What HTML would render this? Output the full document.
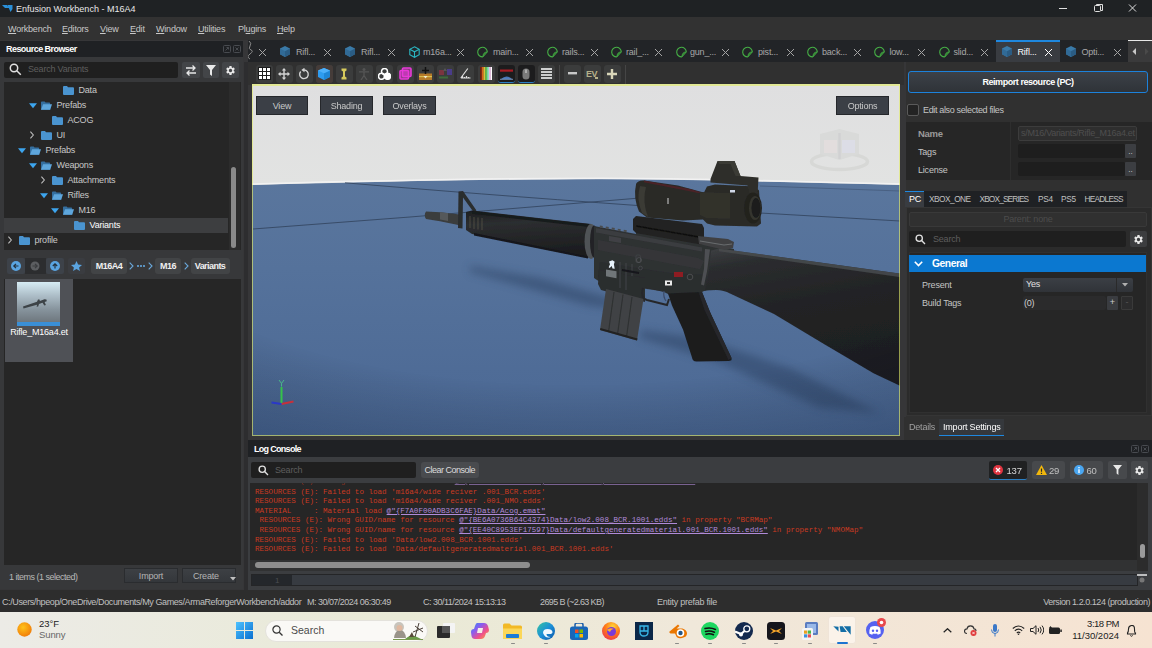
<!DOCTYPE html>
<html><head><meta charset="utf-8">
<style>
*{box-sizing:border-box;margin:0;padding:0}
html,body{width:1152px;height:648px;overflow:hidden;background:#363638;font-family:"Liberation Sans",sans-serif;font-size:9px;letter-spacing:-0.2px;color:#d0d0d0}
.a{position:absolute}
.t{position:absolute;white-space:nowrap;line-height:14px}
.b{font-weight:bold;letter-spacing:-0.55px}
#title{left:0;top:0;width:1152px;height:17px;background:#1f2224}
#menu{left:0;top:17px;width:1152px;height:23px;background:#323232}
#menu .t{top:5px;color:#c8c8c8}
/* left panel */
#lp{left:0;top:41px;width:243px;height:548px;background:#37383a}
#lph{left:0;top:0;width:243px;height:16px;background:#1f2124}
.row{position:absolute;left:0;height:15px;width:224px}
.row .t{top:.5px;color:#c8c8c8;line-height:15px}
.fold{position:absolute;top:3px;width:11px;height:9px}
.arr{position:absolute;top:4px;width:8px;height:8px}
/* tabs */
#tabs{left:248px;top:40px;width:904px;height:22px;background:#222427}
#tabs .t{top:4.700px;color:#a8a8a8}
.x{position:absolute;top:7.500px}
.ti{position:absolute;top:5.500px}
#tb{left:248px;top:62px;width:656px;height:23px;background:#303030}
.tbn{position:absolute;top:2.500px;width:17px;height:18px;background:#3b3c3c;border-radius:3px}
/* viewport */
#vp{left:252px;top:84px;width:648px;height:352px;background:#dedede;overflow:hidden}
#vpb{left:0;top:0;width:648px;height:352px;border:1.500px solid rgba(228,238,104,.62);border-top-width:2px}
.vb{position:absolute;top:12px;height:19px;background:#3b3f46;border:1px solid #25272b;color:#c9c9c9;text-align:center;line-height:18.500px}
/* right panel */
#rp{left:904px;top:62px;width:248px;height:378px;background:#303030}
/* log */
#log{left:248px;top:440px;width:904px;height:150px;background:#3b3d40}
#status{left:0;top:590px;width:1152px;height:22px;background:#2d2d2d}
#status .t{top:5px;color:#c0c0c0}
#task{left:0;top:612px;width:1152px;height:36px;background:linear-gradient(90deg,#ecebe6 0%,#e9ead6 35%,#f0e8da 60%,#f6e3d2 100%)}
.ln{position:absolute;white-space:pre;font-family:"Liberation Mono",monospace;font-size:7.570px;letter-spacing:0;line-height:10px;color:#c93a22}
.lk{color:#b08ad8;text-decoration:underline}
</style></head><body>

<div id="title" class="a">
  <svg class="a" style="left:2px;top:4px" width="11" height="9" viewBox="0 0 11 9"><path d="M0 1h5l2 3h-4zM5.5 1h5v4l-2 3z" fill="#2a8fd8"/></svg>
  <div class="t" style="left:16px;top:2px;font-size:9px;letter-spacing:0;color:#e8e8e8">Enfusion Workbench - M16A4</div>
  <svg class="a" style="left:1058px;top:3px" width="80" height="12" viewBox="0 0 80 12" fill="none" stroke="#e0e0e0" stroke-width="1"><path d="M1 5.5h8"/><rect x="36.500" y="2.500" width="6" height="6" rx="1"/><path d="M38.500 2.500v-1h6v6h-1.500"/><path d="M71 1.500l7 7M78 1.500l-7 7"/></svg>
</div>

<div id="menu" class="a">
  <div class="t" style="left:8px"><u>W</u>orkbench</div>
  <div class="t" style="left:62px"><u>E</u>ditors</div>
  <div class="t" style="left:100px"><u>V</u>iew</div>
  <div class="t" style="left:130px"><u>E</u>dit</div>
  <div class="t" style="left:156px"><u>W</u>indow</div>
  <div class="t" style="left:198px"><u>U</u>tilities</div>
  <div class="t" style="left:238px">Pl<u>u</u>gins</div>
  <div class="t" style="left:277px"><u>H</u>elp</div>
</div>

<div class="a" style="left:244px;top:62px;width:4px;height:528px;background:#2d2d2f"></div>
<div id="lp" class="a"><div id="lph" class="a"><div class="t b" style="left:6px;top:1px;color:#fff">Resource Browser</div><svg class="a" style="left:223px;top:4px" width="20" height="9" viewBox="0 0 20 9" fill="none" stroke="#484b50" stroke-width="1"><rect x=".5" y=".5" width="7" height="7" rx="1"/><path d="M2.500 5.500l3-3M3.500 2.500h2v2"/><rect x="10.500" y=".5" width="7" height="7" rx="1"/><path d="M12.500 2.500l3 3M15.500 2.500l-3 3"/></svg></div>
<div class="a" style="left:4px;top:20.500px;width:174px;height:16.500px;background:#1f1f1f;border-radius:2px"></div>
<svg class="a" style="left:9px;top:22px" width="13" height="13" viewBox="0 0 13 13" fill="none" stroke="#e0e0e0" stroke-width="1.5"><circle cx="5" cy="5" r="3.700"/><path d="M7.800 7.800l4 4"/></svg>
<div class="t" style="left:28px;top:21px;color:#5e5e5e">Search Variants</div>
<div class="a" style="left:182px;top:20.500px;width:18px;height:16.500px;background:#434548;border-radius:2px"></div>
<div class="a" style="left:203px;top:20.500px;width:16px;height:16.500px;background:#434548;border-radius:2px"></div>
<div class="a" style="left:222px;top:20.500px;width:17px;height:16.500px;background:#434548;border-radius:2px"></div>
<svg class="a" style="left:185px;top:23.500px" width="12" height="11" viewBox="0 0 12 11" fill="none" stroke="#e8e8e8" stroke-width="1.300"><path d="M1 3h9M7.500 .5l2.500 2.500-2.500 2.500M11 8h-9M4.500 5.500l-2.500 2.500 2.500 2.500"/></svg>
<svg class="a" style="left:206px;top:23.500px" width="10" height="11" viewBox="0 0 10 11"><path d="M0 0h10l-4 5v6l-2-1.500v-4.500z" fill="#e8e8e8"/></svg>
<svg class="a" style="left:225px;top:23.500px" width="11" height="11" viewBox="0 0 24 24"><path fill="#e8e8e8" d="M19.140 12.940c.04-.3.060-.61.060-.94 0-.32-.02-.64-.07-.94l2.030-1.580a.49.49 0 0 0 .12-.61l-1.920-3.320a.488.488 0 0 0-.59-.22l-2.390.96c-.5-.38-1.030-.7-1.620-.94l-.36-2.540a.484.484 0 0 0-.48-.41h-3.840c-.24 0-.43.170-.47.410l-.36 2.540c-.59.240-1.130.570-1.620.940l-2.390-.96c-.22-.08-.47 0-.59.220L2.740 8.870c-.12.210-.08.470.12.610l2.030 1.580c-.05.300-.09.630-.09.940s.2.640.07.940l-2.030 1.580a.49.49 0 0 0-.12.610l1.920 3.320c.12.220.37.290.59.220l2.390-.96c.5.380 1.030.7 1.620.94l.36 2.540c.5.240.24.410.48.410h3.840c.24 0 .44-.17.470-.41l.36-2.540c.59-.24 1.130-.56 1.620-.94l2.390.96c.22.080.47 0 .59-.22l1.920-3.320c.12-.22.070-.47-.12-.61l-2.010-1.580zM12 15.600c-1.980 0-3.600-1.620-3.600-3.600s1.620-3.600 3.600-3.600 3.600 1.620 3.600 3.600-1.620 3.600-3.600 3.600z"/></svg>
<div class="a" style="left:4px;top:41px;width:237px;height:168px;background:#262626"></div>
<div class="a" style="left:229px;top:41px;width:11px;height:168px;background:#2c2c2c"></div>
<div class="a" style="left:231px;top:126px;width:5px;height:81px;background:#8a8a8a;border-radius:3px"></div>
<div class="row" style="top:41.5px;left:4px;"><svg class="fold" style="left:59px" width="11" height="9" viewBox="0 0 11 9"><path d="M0 1q0-1 1-1h3l1 1.200h5q1 0 1 1v5.800q0 1-1 1h-9q-1 0-1-1z" fill="#4a94d0"/></svg><div class="t" style="left:74.5px;">Data</div></div>
<div class="row" style="top:56.5px;left:4px;"><svg class="arr" style="left:25.3px;top:4.200px" width="7" height="5" viewBox="0 0 7 5"><path d="M0 0h7l-3.500 4.500z" fill="#3da5ee"/></svg><svg class="fold" style="left:37px" width="12" height="9" viewBox="0 0 12 9"><path d="M0 1q0-1 1-1h3l1 1.200h4q1 0 1 1v6.800h-10z" fill="#356f9f"/><path d="M2.300 3.200h9.700l-2 5.800h-10z" fill="#5ea6dc"/></svg><div class="t" style="left:52.5px;">Prefabs</div></div>
<div class="row" style="top:71.5px;left:4px;"><svg class="fold" style="left:48px" width="11" height="9" viewBox="0 0 11 9"><path d="M0 1q0-1 1-1h3l1 1.200h5q1 0 1 1v5.800q0 1-1 1h-9q-1 0-1-1z" fill="#4a94d0"/></svg><div class="t" style="left:63.5px;">ACOG</div></div>
<div class="row" style="top:86.5px;left:4px;"><svg class="arr" style="left:24px;top:3px" width="5" height="9" viewBox="0 0 5 9" fill="none" stroke="#bdbdbd" stroke-width="1.200"><path d="M.7 .8l3.300 3.700-3.300 3.700"/></svg><svg class="fold" style="left:37px" width="11" height="9" viewBox="0 0 11 9"><path d="M0 1q0-1 1-1h3l1 1.200h5q1 0 1 1v5.800q0 1-1 1h-9q-1 0-1-1z" fill="#4a94d0"/></svg><div class="t" style="left:52.5px;">UI</div></div>
<div class="row" style="top:101.5px;left:4px;"><svg class="arr" style="left:14.3px;top:4.200px" width="7" height="5" viewBox="0 0 7 5"><path d="M0 0h7l-3.500 4.500z" fill="#3da5ee"/></svg><svg class="fold" style="left:26px" width="12" height="9" viewBox="0 0 12 9"><path d="M0 1q0-1 1-1h3l1 1.200h4q1 0 1 1v6.800h-10z" fill="#356f9f"/><path d="M2.300 3.200h9.700l-2 5.800h-10z" fill="#5ea6dc"/></svg><div class="t" style="left:41.5px;">Prefabs</div></div>
<div class="row" style="top:116.5px;left:4px;"><svg class="arr" style="left:25.3px;top:4.200px" width="7" height="5" viewBox="0 0 7 5"><path d="M0 0h7l-3.500 4.500z" fill="#3da5ee"/></svg><svg class="fold" style="left:37px" width="12" height="9" viewBox="0 0 12 9"><path d="M0 1q0-1 1-1h3l1 1.200h4q1 0 1 1v6.800h-10z" fill="#356f9f"/><path d="M2.300 3.200h9.700l-2 5.800h-10z" fill="#5ea6dc"/></svg><div class="t" style="left:52.5px;">Weapons</div></div>
<div class="row" style="top:131.5px;left:4px;"><svg class="arr" style="left:35px;top:3px" width="5" height="9" viewBox="0 0 5 9" fill="none" stroke="#bdbdbd" stroke-width="1.200"><path d="M.7 .8l3.300 3.700-3.300 3.700"/></svg><svg class="fold" style="left:48px" width="11" height="9" viewBox="0 0 11 9"><path d="M0 1q0-1 1-1h3l1 1.200h5q1 0 1 1v5.800q0 1-1 1h-9q-1 0-1-1z" fill="#4a94d0"/></svg><div class="t" style="left:63.5px;">Attachments</div></div>
<div class="row" style="top:146.5px;left:4px;"><svg class="arr" style="left:36.3px;top:4.200px" width="7" height="5" viewBox="0 0 7 5"><path d="M0 0h7l-3.500 4.500z" fill="#3da5ee"/></svg><svg class="fold" style="left:48px" width="12" height="9" viewBox="0 0 12 9"><path d="M0 1q0-1 1-1h3l1 1.200h4q1 0 1 1v6.800h-10z" fill="#356f9f"/><path d="M2.300 3.200h9.700l-2 5.800h-10z" fill="#5ea6dc"/></svg><div class="t" style="left:63.5px;">Rifles</div></div>
<div class="row" style="top:161.5px;left:4px;"><svg class="arr" style="left:47.3px;top:4.200px" width="7" height="5" viewBox="0 0 7 5"><path d="M0 0h7l-3.500 4.500z" fill="#3da5ee"/></svg><svg class="fold" style="left:59px" width="12" height="9" viewBox="0 0 12 9"><path d="M0 1q0-1 1-1h3l1 1.200h4q1 0 1 1v6.800h-10z" fill="#356f9f"/><path d="M2.300 3.200h9.700l-2 5.800h-10z" fill="#5ea6dc"/></svg><div class="t" style="left:74.5px;">M16</div></div>
<div class="row" style="top:176.5px;left:4px;background:#3d3e40;"><svg class="fold" style="left:70px" width="11" height="9" viewBox="0 0 11 9"><path d="M0 1q0-1 1-1h3l1 1.200h5q1 0 1 1v5.800q0 1-1 1h-9q-1 0-1-1z" fill="#4a94d0"/></svg><div class="t" style="left:85.5px;color:#fff;">Variants</div></div>
<div class="row" style="top:191.5px;left:4px;"><svg class="arr" style="left:2px;top:3px" width="5" height="9" viewBox="0 0 5 9" fill="none" stroke="#bdbdbd" stroke-width="1.200"><path d="M.7 .8l3.300 3.700-3.300 3.700"/></svg><svg class="fold" style="left:15px" width="11" height="9" viewBox="0 0 11 9"><path d="M0 1q0-1 1-1h3l1 1.200h5q1 0 1 1v5.800q0 1-1 1h-9q-1 0-1-1z" fill="#4a94d0"/></svg><div class="t" style="left:30.5px;">profile</div></div>
<div class="a" style="left:7px;top:217px;width:18px;height:16px;background:#3d4249;border-radius:2px"></div>
<div class="a" style="left:25px;top:217px;width:21px;height:16px;background:#2c2d2f"></div>
<div class="a" style="left:46px;top:217px;width:18px;height:16px;background:#3d4249;border-radius:2px"></div>
<div class="a" style="left:68px;top:217px;width:17px;height:16px;background:#3a3c40;border-radius:2px"></div>
<svg class="a" style="left:11px;top:220px" width="10" height="10" viewBox="0 0 10 10"><circle cx="5" cy="5" r="5" fill="#5aa4e0"/><path d="M7.500 5h-4.500M5 2.800l-2.200 2.200 2.200 2.200" stroke="#22303c" stroke-width="1.200" fill="none"/></svg>
<svg class="a" style="left:30px;top:220px" width="10" height="10" viewBox="0 0 10 10"><circle cx="5" cy="5" r="4.500" fill="#5c5e61"/><path d="M2.500 5h4.500M5 2.800l2.200 2.200-2.200 2.200" stroke="#3a3c3f" stroke-width="1.200" fill="none"/></svg>
<svg class="a" style="left:50px;top:220px" width="10" height="10" viewBox="0 0 10 10"><circle cx="5" cy="5" r="5" fill="#5aa4e0"/><path d="M5 7.500v-4.500M2.800 5l2.200-2.200 2.200 2.200" stroke="#22303c" stroke-width="1.200" fill="none"/></svg>
<svg class="a" style="left:71px;top:220px" width="11" height="10" viewBox="0 0 11 10"><path d="M5.500 0l1.600 3.500 3.900.4-2.900 2.600.8 3.500-3.400-1.900-3.400 1.900.8-3.500-2.900-2.600 3.900-.4z" fill="#5aa4e0"/></svg>
<div class="a b" style="left:91px;top:217px;width:36px;height:16px;background:#424446;border-radius:3px;color:#f0f0f0;text-align:center;line-height:16px">M16A4</div>
<div class="a b" style="left:155px;top:217px;width:26px;height:16px;background:#424446;border-radius:3px;color:#f0f0f0;text-align:center;line-height:16px">M16</div>
<div class="a b" style="left:190.5px;top:217px;width:39px;height:16px;background:#424446;border-radius:3px;color:#f0f0f0;text-align:center;line-height:16px">Variants</div>
<svg class="a" style="left:129px;top:221px" width="5" height="8" viewBox="0 0 5 8" fill="none" stroke="#6aa8da" stroke-width="1.100"><path d="M.7 .7l3.300 3.300-3.300 3.300"/></svg>
<svg class="a" style="left:148px;top:221px" width="5" height="8" viewBox="0 0 5 8" fill="none" stroke="#6aa8da" stroke-width="1.100"><path d="M.7 .7l3.300 3.300-3.300 3.300"/></svg>
<svg class="a" style="left:183.5px;top:221px" width="5" height="8" viewBox="0 0 5 8" fill="none" stroke="#6aa8da" stroke-width="1.100"><path d="M.7 .7l3.300 3.300-3.300 3.300"/></svg>
<div class="a" style="left:137px;top:224px;width:1.500px;height:1.500px;background:#5a90bc;box-shadow:3px 0 #5a90bc,6px 0 #5a90bc"></div>
<div class="a" style="left:4px;top:238px;width:237px;height:286px;background:#262626"></div>
<div class="a" style="left:5px;top:238px;width:68px;height:83px;background:#4f5156"></div>
<div class="a" style="left:17px;top:241px;width:43px;height:44px;background:linear-gradient(#d6ecf4 0%,#aebfc9 30%,#87949d 62%,#6f787f 90%,#3a8fd6 90%)"></div>
<svg class="a" style="left:22px;top:255px" width="32" height="14" viewBox="0 0 32 14"><path d="M1 10.500l14-4.800 1-2.200h1.500l.4 1.500 4.500-1.800 2 .4 .4 1.600-2.200 .9 1.300 2.800-1.600 .6-1.800-2.800-3.500 1.300-.8 2.400-1.600 .3 .4-2-13.500 3.800z" fill="#3d4347"/></svg>
<div class="t" style="left:5px;top:284px;width:68px;text-align:center;color:#fff">Rifle_M16a4.et</div>
<div class="t" style="left:9px;top:529px;color:#b8b8b8;letter-spacing:-0.5px">1 items (1 selected)</div>
<div class="a" style="left:124px;top:527px;width:54px;height:15px;background:linear-gradient(#3d4044,#34373b);border:1px solid #2a2c2f;color:#b4b4b4;text-align:center;line-height:14.500px">Import</div>
<div class="a" style="left:182px;top:527px;width:54px;height:15px;background:linear-gradient(#3d4044,#34373b);border:1px solid #2a2c2f;color:#b4b4b4;line-height:14.500px;padding-left:10px">Create</div>
<svg class="a" style="left:230px;top:536px" width="6" height="4" viewBox="0 0 6 4"><path d="M0 0h6l-3 3.500z" fill="#c0c0c0"/></svg></div>
<div id="tabs" class="a"><svg class="a" style="left:0;top:0" width="5" height="20" viewBox="0 0 5 20" fill="none" stroke="#8a8a8a" stroke-width="1"><path d="M1 1q3 2 1 5t1 4-1 4 0 5"/></svg>
<svg class="x" style="left:10.0px" width="9" height="9" viewBox="0 0 9 9" stroke="#a4a4a4" stroke-width="1" fill="none"><path d="M1 1l7 7M8 1l-7 7"/></svg>
<div class="a" style="left:748px;top:0;width:64px;height:22px;background:#393c41;border-top:2px solid #1e88e0"></div>
<svg class="ti" style="left:32px;top:6px" width="10" height="11" viewBox="0 0 11 12"><path d="M5.500 0l5.500 2.800v6.200l-5.500 3-5.500-3v-6.200z" fill="#3a7aa8"/><path d="M5.500 5.600l5.500-2.800v6.200l-5.500 3z" fill="#2a5c84"/><path d="M5.500 5.600l-5.500-2.800v6.200l5.500 3z" fill="#316a96"/></svg>
<div class="t" style="left:48px;">Rifl...</div>
<svg class="x" style="left:74.5px" width="9" height="9" viewBox="0 0 9 9" stroke="#a4a4a4" stroke-width="1" fill="none"><path d="M1 1l7 7M8 1l-7 7"/></svg>
<svg class="ti" style="left:96.5px;top:6px" width="10" height="11" viewBox="0 0 11 12"><path d="M5.500 0l5.500 2.800v6.200l-5.500 3-5.500-3v-6.200z" fill="#3a7aa8"/><path d="M5.500 5.600l5.500-2.800v6.200l-5.500 3z" fill="#2a5c84"/><path d="M5.500 5.600l-5.500-2.800v6.200l5.500 3z" fill="#316a96"/></svg>
<div class="t" style="left:113px;">Rifl...</div>
<svg class="x" style="left:138.5px" width="9" height="9" viewBox="0 0 9 9" stroke="#a4a4a4" stroke-width="1" fill="none"><path d="M1 1l7 7M8 1l-7 7"/></svg>
<svg class="ti" style="left:160.5px" width="11" height="12" viewBox="0 0 11 12" fill="none" stroke="#2bb4c0" stroke-width="1.100"><path d="M5.500 .8l4.700 2.500v5.400l-4.700 2.600-4.700-2.600v-5.400z"/><path d="M.8 3.300l4.700 2.500 4.700-2.500M5.500 5.800v5.400"/></svg>
<div class="t" style="left:175px;">m16a...</div>
<svg class="x" style="left:207.5px" width="9" height="9" viewBox="0 0 9 9" stroke="#a4a4a4" stroke-width="1" fill="none"><path d="M1 1l7 7M8 1l-7 7"/></svg>
<svg class="ti" style="left:228.5px" width="11" height="12" viewBox="0 0 11 12" fill="none" stroke="#45ae45" stroke-width="1.100"><path d="M10.300 6a4.800 4.800 0 1 0 -4.300 4.800"/><path d="M10.300 6q-4.300 0-4.300 4.800z" fill="#2f7a2f" stroke-width=".9"/></svg>
<div class="t" style="left:245px;">main...</div>
<svg class="x" style="left:276.5px" width="9" height="9" viewBox="0 0 9 9" stroke="#a4a4a4" stroke-width="1" fill="none"><path d="M1 1l7 7M8 1l-7 7"/></svg>
<svg class="ti" style="left:298.5px" width="11" height="12" viewBox="0 0 11 12" fill="none" stroke="#45ae45" stroke-width="1.100"><path d="M10.300 6a4.800 4.800 0 1 0 -4.300 4.800"/><path d="M10.300 6q-4.300 0-4.300 4.800z" fill="#2f7a2f" stroke-width=".9"/></svg>
<div class="t" style="left:314px;">rails...</div>
<svg class="x" style="left:341.5px" width="9" height="9" viewBox="0 0 9 9" stroke="#a4a4a4" stroke-width="1" fill="none"><path d="M1 1l7 7M8 1l-7 7"/></svg>
<svg class="ti" style="left:362.5px" width="11" height="12" viewBox="0 0 11 12" fill="none" stroke="#45ae45" stroke-width="1.100"><path d="M10.300 6a4.800 4.800 0 1 0 -4.300 4.800"/><path d="M10.300 6q-4.300 0-4.300 4.800z" fill="#2f7a2f" stroke-width=".9"/></svg>
<div class="t" style="left:378px;">rail_...</div>
<svg class="x" style="left:405.5px" width="9" height="9" viewBox="0 0 9 9" stroke="#a4a4a4" stroke-width="1" fill="none"><path d="M1 1l7 7M8 1l-7 7"/></svg>
<svg class="ti" style="left:427.5px" width="11" height="12" viewBox="0 0 11 12" fill="none" stroke="#45ae45" stroke-width="1.100"><path d="M10.300 6a4.800 4.800 0 1 0 -4.300 4.800"/><path d="M10.300 6q-4.300 0-4.300 4.800z" fill="#2f7a2f" stroke-width=".9"/></svg>
<div class="t" style="left:442px;">gun_...</div>
<svg class="x" style="left:473.0px" width="9" height="9" viewBox="0 0 9 9" stroke="#a4a4a4" stroke-width="1" fill="none"><path d="M1 1l7 7M8 1l-7 7"/></svg>
<svg class="ti" style="left:494.0px" width="11" height="12" viewBox="0 0 11 12" fill="none" stroke="#45ae45" stroke-width="1.100"><path d="M10.300 6a4.800 4.800 0 1 0 -4.300 4.800"/><path d="M10.300 6q-4.300 0-4.300 4.800z" fill="#2f7a2f" stroke-width=".9"/></svg>
<div class="t" style="left:510px;">pist...</div>
<svg class="x" style="left:537.5px" width="9" height="9" viewBox="0 0 9 9" stroke="#a4a4a4" stroke-width="1" fill="none"><path d="M1 1l7 7M8 1l-7 7"/></svg>
<svg class="ti" style="left:558.5px" width="11" height="12" viewBox="0 0 11 12" fill="none" stroke="#45ae45" stroke-width="1.100"><path d="M10.300 6a4.800 4.800 0 1 0 -4.300 4.800"/><path d="M10.300 6q-4.300 0-4.300 4.800z" fill="#2f7a2f" stroke-width=".9"/></svg>
<div class="t" style="left:574px;">back...</div>
<svg class="x" style="left:604.5px" width="9" height="9" viewBox="0 0 9 9" stroke="#a4a4a4" stroke-width="1" fill="none"><path d="M1 1l7 7M8 1l-7 7"/></svg>
<svg class="ti" style="left:625.5px" width="11" height="12" viewBox="0 0 11 12" fill="none" stroke="#45ae45" stroke-width="1.100"><path d="M10.300 6a4.800 4.800 0 1 0 -4.300 4.800"/><path d="M10.300 6q-4.300 0-4.300 4.800z" fill="#2f7a2f" stroke-width=".9"/></svg>
<div class="t" style="left:641.5px;">low...</div>
<svg class="x" style="left:668.5px" width="9" height="9" viewBox="0 0 9 9" stroke="#a4a4a4" stroke-width="1" fill="none"><path d="M1 1l7 7M8 1l-7 7"/></svg>
<svg class="ti" style="left:690.5px" width="11" height="12" viewBox="0 0 11 12" fill="none" stroke="#45ae45" stroke-width="1.100"><path d="M10.300 6a4.800 4.800 0 1 0 -4.300 4.800"/><path d="M10.300 6q-4.300 0-4.300 4.800z" fill="#2f7a2f" stroke-width=".9"/></svg>
<div class="t" style="left:705.5px;">slid...</div>
<svg class="x" style="left:731.5px" width="9" height="9" viewBox="0 0 9 9" stroke="#a4a4a4" stroke-width="1" fill="none"><path d="M1 1l7 7M8 1l-7 7"/></svg>
<svg class="ti" style="left:754px;top:6px" width="10" height="11" viewBox="0 0 11 12"><path d="M5.500 0l5.500 2.800v6.200l-5.500 3-5.500-3v-6.200z" fill="#3a7aa8"/><path d="M5.500 5.600l5.500-2.800v6.200l-5.500 3z" fill="#2a5c84"/><path d="M5.500 5.600l-5.500-2.800v6.200l5.500 3z" fill="#316a96"/></svg>
<div class="t" style="left:769.5px;color:#fff;">Rifl...</div>
<svg class="x" style="left:796.0px" width="9" height="9" viewBox="0 0 9 9" stroke="#ffffff" stroke-width="1" fill="none"><path d="M1 1l7 7M8 1l-7 7"/></svg>
<svg class="ti" style="left:818px;top:6px" width="10" height="11" viewBox="0 0 11 12"><path d="M5.500 0l5.500 2.800v6.200l-5.500 3-5.500-3v-6.200z" fill="#3a7aa8"/><path d="M5.500 5.600l5.500-2.800v6.200l-5.500 3z" fill="#2a5c84"/><path d="M5.500 5.600l-5.500-2.800v6.200l5.500 3z" fill="#316a96"/></svg>
<div class="t" style="left:833.5px;">Opti...</div>
<svg class="x" style="left:864.5px" width="9" height="9" viewBox="0 0 9 9" stroke="#a4a4a4" stroke-width="1" fill="none"><path d="M1 1l7 7M8 1l-7 7"/></svg>
<div class="a" style="left:880px;top:0;width:24px;height:22px;background:#3a3a3b;border-top:1px solid #e8e8e8"></div>
<svg class="a" style="left:884px;top:8px" width="18" height="7" viewBox="0 0 18 7"><path d="M4 0v7l-3.500-3.500z" fill="#c8c8c8"/><path d="M13 0v7l3.500-3.500z" fill="#4a4a4a"/></svg></div>
<div id="tb" class="a"><div class="tbn" style="left:7.5px"></div>
<div class="tbn" style="left:27.5px"></div>
<div class="tbn" style="left:47.5px"></div>
<div class="tbn" style="left:67.5px"></div>
<div class="tbn" style="left:87.5px"></div>
<div class="tbn" style="left:107.5px"></div>
<div class="tbn" style="left:128.0px"></div>
<div class="tbn" style="left:148.5px"></div>
<div class="tbn" style="left:168.5px"></div>
<div class="tbn" style="left:188.5px"></div>
<div class="tbn" style="left:209.0px"></div>
<div class="tbn" style="left:229.5px"></div>
<div class="tbn" style="left:249.5px;background:#1c1c1d;border-bottom:1px solid #2a7fc4"></div>
<div class="tbn" style="left:269.5px;background:#1c1c1d;border-bottom:1px solid #2a7fc4"></div>
<div class="tbn" style="left:289.5px"></div>
<div class="tbn" style="left:315.5px"></div>
<div class="tbn" style="left:335.5px"></div>
<div class="tbn" style="left:355.5px"></div>
<div class="tbn" style="left:67.5px;background:#453c39"></div>
<svg class="a" style="left:9.5px;top:5.0px" width="13" height="13" viewBox="0 0 13 13"><rect width="13" height="13" fill="#1c1c1c"/><rect x="1" y="1" width="3" height="3" fill="#fff"/><rect x="1" y="5" width="3" height="3" fill="#fff"/><rect x="1" y="9" width="3" height="3" fill="#fff"/><rect x="5" y="1" width="3" height="3" fill="#fff"/><rect x="5" y="5" width="3" height="3" fill="#fff"/><rect x="5" y="9" width="3" height="3" fill="#fff"/><rect x="9" y="1" width="3" height="3" fill="#fff"/><rect x="9" y="5" width="3" height="3" fill="#fff"/><rect x="9" y="9" width="3" height="3" fill="#fff"/></svg>
<svg class="a" style="left:30.0px;top:5.5px" width="12" height="12" viewBox="0 0 12 12"><path d="M6 0l2.200 2.500h-1.500v2.800h2.800v-1.500l2.500 2.200-2.500 2.200v-1.500h-2.800v2.800h1.500l-2.200 2.500-2.200-2.500h1.500v-2.800h-2.800v1.500l-2.500-2.200 2.500-2.200v1.500h2.800v-2.800h-1.500z" fill="#d4d4d4"/></svg>
<svg class="a" style="left:50.0px;top:5.5px" width="12" height="12" viewBox="0 0 12 12"><path d="M2.700 3.500a4.300 4.300 0 1 0 3.300-1.500" fill="none" stroke="#d4d4d4" stroke-width="1.400"/><path d="M6.500 -.3v4.600l-3.200-2.300z" fill="#d4d4d4"/></svg>
<svg class="a" style="left:70.0px;top:5.5px" width="12" height="12" viewBox="0 0 12 12"><path d="M6 0l6 2.500v6.500l-6 3-6-3v-6.500z" fill="#2d9cf0"/><path d="M6 5.200l6-2.700v6.500l-6 3z" fill="#1f86d6"/><path d="M6 0l6 2.500-6 2.700-6-2.700z" fill="#4db0fa"/></svg>
<svg class="a" style="left:93.0px;top:5.5px" width="6" height="12" viewBox="0 0 6 12"><path d="M.5 .5h5v2l-1.500 1v5l1.500 1v2h-5v-2l1.500-1v-5l-1.500-1z" fill="#d6c95c"/></svg>
<svg class="a" style="left:111.0px;top:5.5px" width="10" height="12" viewBox="0 0 10 12"><circle cx="5" cy="1.600" r="1.500" fill="#555"/><path d="M0 3.800h10M5 3.500v4M5 7.500l-3 4.500M5 7.500l3 4.500" stroke="#555" stroke-width="1.300" fill="none"/></svg>
<svg class="a" style="left:130.0px;top:5.5px" width="13" height="12" viewBox="0 0 13 12"><circle cx="6.500" cy="3.500" r="3" fill="none" stroke="#fff" stroke-width="1.500"/><circle cx="3.500" cy="8.300" r="3" fill="none" stroke="#fff" stroke-width="1.500"/><circle cx="9.500" cy="8.300" r="3" fill="#fff" stroke="#fff" stroke-width="1.500"/></svg>
<svg class="a" style="left:150.5px;top:5.0px" width="13" height="13" viewBox="0 0 13 13"><rect x="1" y="3.500" width="8.500" height="8.500" rx="1" fill="#e83ad8" fill-opacity=".55" stroke="#e83ad8" stroke-width="1.600"/><rect x="3.500" y="1" width="8.500" height="8.500" rx="1" fill="#e83ad8" fill-opacity=".45" stroke="#e83ad8" stroke-width="1.600"/></svg>
<svg class="a" style="left:170.5px;top:5.0px" width="13" height="13" viewBox="0 0 13 13"><rect y="6.500" width="13" height="6.500" fill="#b57a28"/><rect y="9" width="13" height="1.200" fill="#d8c050"/><path d="M6.500 0v7M3 3.500h7" stroke="#111" stroke-width="1.500"/><path d="M6.500 11.500l-2-2.500h4z" fill="#f0e8d0"/></svg>
<svg class="a" style="left:190.5px;top:5.0px" width="13" height="13" viewBox="0 0 13 13"><rect x="0" y="3" width="5" height="5" fill="#7a3440"/><rect x="8" y="2" width="5" height="6" fill="#4a3c8a"/><rect x="0" y="9.500" width="9" height="2" fill="#3e6a3a"/><path d="M6 1l2 3h-4z" fill="#555"/></svg>
<svg class="a" style="left:212.0px;top:6.0px" width="11" height="11" viewBox="0 0 11 11"><path d="M.8 10l7-9.500M.8 10h9.700M2.500 10v-2.500M4.500 10v-1M6.500 10v-2M8.500 10v-1" stroke="#e0e0e0" stroke-width="1.200" fill="none"/></svg>
<svg class="a" style="left:231.7px;top:5.0px" width="12.6" height="13" viewBox="0 0 12.6 13"><rect x="0.0" width="1.900" height="13" fill="#6a1f10"/><rect x="1.8" width="1.900" height="13" fill="#d8641c"/><rect x="3.6" width="1.900" height="13" fill="#d8c23a"/><rect x="5.4" width="1.900" height="13" fill="#5ec24e"/><rect x="7.2" width="1.900" height="13" fill="#8fe0c0"/><rect x="9.0" width="1.900" height="13" fill="#e8b8e0"/><rect x="10.8" width="1.900" height="13" fill="#ffffff"/></svg>
<svg class="a" style="left:251.5px;top:5.5px" width="13" height="12" viewBox="0 0 13 12"><rect y="1.500" width="13" height="2.200" fill="#a81c24"/><path d="M1 11q5.500-5 11 0z" fill="#4a78b8"/><path d="M0 11.300h13" stroke="#8ab0e0" stroke-width=".8"/></svg>
<svg class="a" style="left:274.0px;top:5.5px" width="8" height="12" viewBox="0 0 8 12"><rect x=".5" y=".5" width="7" height="11" rx="3.500" fill="#7a7a7a"/><rect x="3.400" y="1.500" width="1.200" height="3.500" fill="#d0d0d0"/></svg>
<svg class="a" style="left:292.5px;top:6.0px" width="11" height="11" viewBox="0 0 11 11"><path d="M0 1h11M0 4h11M0 7h11M0 10h11" stroke="#fff" stroke-width="1.500"/></svg>
<div class="a" style="left:311px;top:3px;width:1px;height:19px;background:#454545"></div>
<svg class="a" style="left:319.5px;top:10.0px" width="9" height="3" viewBox="0 0 9 3"><rect width="9" height="2.400" fill="#c8c8c8"/></svg>
<div class="t b" style="left:338px;top:5px;color:#b5b18a;font-size:9px;letter-spacing:-0.5px">EV</div><div class="a" style="left:347px;top:15px;width:3px;height:2px;background:#b5b18a"></div>
<svg class="a" style="left:359.0px;top:6.5px" width="10" height="10" viewBox="0 0 10 10"><path d="M5 0v10M0 5h10" stroke="#d8d5b8" stroke-width="2.400"/></svg>
<div class="a" style="left:376.5px;top:3px;width:1px;height:19px;background:#454545"></div></div>
<div id="vp" class="a"><svg class="a" style="left:0;top:0" width="649" height="352" viewBox="252 84 649 352">
<defs>
<linearGradient id="sky" x1="0" y1="0" x2="0" y2="1"><stop offset="0" stop-color="#dfdfe0"/><stop offset="1" stop-color="#e2e3e2"/></linearGradient>
<linearGradient id="gnd" x1="0" y1="0" x2="0" y2="1"><stop offset="0" stop-color="#5a769d"/><stop offset=".35" stop-color="#55729b"/><stop offset="1" stop-color="#4b6894"/></linearGradient>
<radialGradient id="vig" cx=".5" cy=".1" r="1"><stop offset=".7" stop-color="#000" stop-opacity="0"/><stop offset="1" stop-color="#0a1830" stop-opacity=".22"/></radialGradient>
<linearGradient id="stk" x1="0" y1="0" x2=".25" y2="1"><stop offset="0" stop-color="#3e4043"/><stop offset=".14" stop-color="#2b2d2f"/><stop offset=".5" stop-color="#222325"/><stop offset="1" stop-color="#1d1e20"/></linearGradient>
<linearGradient id="hg" x1="0" y1="0" x2=".15" y2="1"><stop offset="0" stop-color="#1c1d1f"/><stop offset=".3" stop-color="#2c2e30"/><stop offset="1" stop-color="#1b1c1e"/></linearGradient>
<filter id="bl" x="-20%" y="-50%" width="140%" height="200%"><feGaussianBlur stdDeviation="4"/></filter>
<filter id="b1"><feGaussianBlur stdDeviation=".6"/></filter>
</defs>
<rect x="252" y="84" width="649" height="102" fill="url(#sky)"/>
<path d="M252 185C380 181.500 500 179.300 600 179.300S790 182.600 901 184.900V436H252z" fill="url(#gnd)"/>
<path d="M252 185C380 181.500 500 179.300 600 179.300S790 182.600 901 184.900" fill="none" stroke="#f2f2f2" stroke-width="1.600" transform="translate(0,-1)"/>
<!-- grid lines -->
<g stroke="#2f3f58" stroke-width=".9" fill="none" opacity=".85">
<path d="M345 182.800Q470 193.500 640 205.700l114-1.200"/>
<path d="M253 229l157-12 230-19 60-3"/>
<path d="M760 213l140 8"/>
<path d="M760 186l140 5" opacity=".5"/>
</g>
<!-- ground shadows -->
<g filter="url(#bl)" fill="#2f4566" opacity=".55">
<path d="M470 266l70 12 70 20 20 12-40-4-70-20-50-14z"/>
<path d="M640 330l60 8 90 30 90 45-60-5-100-45-80-25z"/>
</g>
<g filter="url(#b1)">
<!-- barrel + muzzle -->
<path d="M426 211.500l14 .8 22 2.500 0 11-22-4.500-14-2.300q-2.500-4 0-7.500z" fill="#3a3c3d"/>
<path d="M440 212.300l8 .8v8l-8-1.500z" fill="#55585a"/>
<!-- front sight -->
<path d="M458.500 191.500l4.500-.5 13.500 19.500-3 1.500-10.500-14.500-.5 31-4.500-.5z" fill="#2b2d2f"/>
<!-- handguard -->
<path d="M466 212l6-1.500 119 13.500 3 33-5 .5-117-23.500-6-4z" fill="url(#hg)"/>
<path d="M472 211l119 13.200v3l-119-13.500z" fill="#191a1c"/>
<path d="M474 233l114 23.500v2l-114-23z" fill="#15161a"/>
<g stroke="#5a5648" stroke-width="1" opacity=".7"><path d="M470 216v12M474 217v12M478 217.500v12M482 218v12"/></g>
<!-- delta ring -->
<ellipse cx="591" cy="241.500" rx="6.500" ry="17.500" fill="#505356"/>
<ellipse cx="594" cy="241.500" rx="4" ry="16" fill="#222325"/>
<!-- upper receiver -->
<path d="M594 226l42 8 0-3 66 12 32 6 0 8-14 4-2 26-14 4-36 1-28-4-40-6-6-4z" fill="#2e3032"/>
<path d="M596 228l106 19.500v4l-106-19z" fill="#3b3d40"/>
<g fill="#4a4c4e"><rect x="600" y="225.500" width="3" height="2" transform="rotate(10 600 225)"/><rect x="606" y="226.500" width="3" height="2" transform="rotate(10 606 226)"/><rect x="612" y="227.600" width="3" height="2" transform="rotate(10 612 227)"/><rect x="618" y="228.700" width="3" height="2" transform="rotate(10 618 228)"/><rect x="624" y="229.800" width="3" height="2" transform="rotate(10 624 229)"/></g>
<!-- lower receiver -->
<path d="M600 262l30 5 40 6 36 2 2 14-10 5-26 2-8-4-22-5-12 2-28-6-4-6z" fill="#2b2d2f"/>

<rect x="665" y="280.500" width="7" height="5" fill="#e8e8e8"/><rect x="667" y="282" width="3" height="2" fill="#333"/>
<rect x="674" y="272" width="9" height="5" fill="#8e1c22"/>
<circle cx="690" cy="277" r="2.800" fill="none" stroke="#4a4c4e" stroke-width="1"/>
<circle cx="639" cy="260" r="2.500" fill="none" stroke="#4a4c4e" stroke-width="1"/>
<path d="M705 249l5 .5-3 22-3 14-3-1 3-16z" fill="#4e5052"/>
<path d="M599 270l46 8 0 24-44-12-3-6z" fill="#2b2d2f"/>
<path d="M606 269.500l10.500 1.800v7l-10.500-2z" fill="#7d8486" opacity=".85"/>
<path d="M609 261.500l3.500-1.200 2.200 1.500-.8 2.500.8 4.500-2.200-.3-.8-2.500-2 2-1-.7 1.300-3z" fill="#e6f2fa"/>
<g stroke="#55585b" stroke-width=".7" fill="none" opacity=".8"><path d="M620 262v26M626 263v27M632 264v12"/><rect x="636" y="255" width="4.500" height="7.500" rx="1.500"/><circle cx="640.500" cy="268" r="1.800"/></g>
<path d="M598 240l100 18 6 3-4 8-102-19z" fill="#3a3c3f" opacity=".55"/>
<path d="M609 236l12 2v5l-12-2z" fill="#3f4144"/>
<path d="M622 270l17 3" stroke="#15161a" stroke-width="2"/>
<!-- magazine -->
<path d="M606 289l37.500 10-6.500 41.500-37-10.500z" fill="#414345"/>
<g stroke="#2e3032" stroke-width="1.200"><path d="M614 292l-5.500 40M623 294.500l-5.500 40M632 297l-5.500 40"/></g>
<path d="M637 340.500l-37-10.500 .5-2 37 10.500z" fill="#222"/>
<!-- trigger guard -->
<path d="M643 288q-3 10 4 12l20 5 2-6" fill="none" stroke="#26282a" stroke-width="2"/>
<path d="M664 291q-1 6 2 10" fill="none" stroke="#3a4a68" stroke-width="1.200"/>
<!-- pistol grip -->
<path d="M668 293.500l34-1.500 8 20 21.500 46q1 3-3 3l-32 .5q-4 0-4.500-4l-9-28-11-24z" fill="#1b1c1e"/>
<path d="M702 292l8 20 21.500 46-3 2-24-50-6-18z" fill="#252729"/>
<!-- stock -->
<path d="M719 248.600l182 25.100v112.500l-27.500-13-50-29.500-49.500-29.700-44-20.500q-6-3.500-14-3.500l-11 .5 4-20 2-20z" fill="url(#stk)"/>
<path d="M719 248.600l182 25.100v3.500l-182-26z" fill="#4a4d50" opacity=".8"/>
<!-- scope mount -->
<path d="M633 219l3-3 66 8 2 4v17l-68-12-3-3z" fill="#222220"/>
<path d="M636 226l66 11.500" stroke="#111" stroke-width="1.500"/>
<!-- rear sight / charging handle -->
<path d="M698 236l30 3 6 3-1 6-8 2-26-6z" fill="#3f4143"/>
<path d="M700 241l24 4 8-1" stroke="#6a6c6e" stroke-width="1" fill="none"/>
<!-- ACOG -->
<path d="M636 184q2-4 8-3.500l34 5 22 6 4 1 3-6 8-2 40 2 4 4 2 33-4 3-42-1-8-2-4-4-20 1-36-3-8-6q-6-14-3-27z" fill="#2a2a27"/>
<path d="M644 180.500l46 8.500 10 3-.5 1.300-11-2.300-44.500-8.800z" fill="#4c2326"/>
<path d="M640 186q-4 12 2 27l6 4q-6-16-2-30z" fill="#3a3a35"/>
<path d="M700 192l30 1 0 26-24-1-6-3z" fill="#30302c"/>
<!-- RMR -->
<path d="M710.500 179l7-18 17 0 6 15 18 1.500-1 18-8-2-2-8-37-3z" fill="#2f2f2a"/>
<path d="M717.500 161l17 0 6 15-5 0-5-12-11 0z" fill="#3b3b35"/>
<!-- eyepiece -->
<ellipse cx="753" cy="208" rx="9" ry="15.500" fill="#22221f"/>
<ellipse cx="755" cy="208" rx="6" ry="12" fill="#35352f"/>
<ellipse cx="756" cy="208" rx="4.500" ry="10" fill="#1a1b1c"/>
<rect x="730" y="190" width="5" height="2.500" fill="#d0d8e8"/>
<path d="M668 198v6" stroke="#9a9a9a" stroke-width="1.500"/>
</g>
<!-- vignette -->
<path d="M252 185C380 181.500 500 179.300 600 179.300S790 182.600 901 184.900V436H252z" fill="url(#vig)"/>
<!-- view cube (faint) -->
<ellipse cx="839.500" cy="161.500" rx="28" ry="8" fill="none" stroke="#d7d8d6" stroke-width="3.500"/>
<path d="M820 134l19.500-5 19.500 5v20l-19.500 6-19.500-6z" fill="#d9dad9"/>
<path d="M824 140h13v13h-13z" fill="#e2dddd"/><path d="M842 140h13v13h-13z" fill="#dcdde6"/>
<path d="M839.500 133v26" stroke="#d0d1d2" stroke-width="2.500"/>
<!-- axis gizmo -->
<path d="M281.500 404v-17" stroke="#35c24a" stroke-width="2"/>
<path d="M281.500 404l12-2.500" stroke="#c8303a" stroke-width="1.800"/>
<path d="M281.500 404l-10-1.500" stroke="#2a38c8" stroke-width="1.800"/>
<path d="M279 380l2.500 3.500l2.500-3.500M281.500 383.500v3" stroke="#4ac08a" stroke-width=".9" fill="none"/>
</svg>
<div class="vb" style="left:4px;width:52px">View</div>
<div class="vb" style="left:68px;width:53px">Shading</div>
<div class="vb" style="left:131px;width:53px">Overlays</div>
<div class="vb" style="left:584px;width:53px">Options</div><div id="vpb" class="a"></div></div>
<div id="rp" class="a"><div class="a" style="left:0px;top:0px;width:2px;height:378px;background:#363638"></div>
<div class="a" style="left:4px;top:9px;width:240px;height:22px;background:linear-gradient(#3c4148,#2f3338);border:1px solid #1c82dc;border-radius:3px;text-align:center;line-height:20px;color:#fff;font-weight:bold;letter-spacing:-0.45px">Reimport resource (PC)</div>
<div class="a" style="left:3px;top:42px;width:12px;height:12px;background:#232323;border:1px solid #5a5a5a;border-radius:2px"></div>
<div class="t" style="left:19px;top:41px;color:#c4c4c4;letter-spacing:-0.35px">Edit also selected files</div>
<div class="a" style="left:2px;top:60px;width:246px;height:58px;background:#262626"></div>
<div class="a" style="left:106px;top:60px;width:1px;height:58px;background:#2e2e2e"></div>
<div class="t b" style="left:14px;top:65px;color:#9a9a9a;font-size:9.500px;letter-spacing:-0.3px">Name</div>
<div class="t" style="left:14px;top:83px;color:#c4c4c4">Tags</div>
<div class="t" style="left:14px;top:101px;color:#c4c4c4">License</div>
<div class="a" style="left:114px;top:64px;width:119px;height:15px;background:#2e2e2e;border:1px solid #3c3c3c;border-radius:2px;color:#4e4e4e;line-height:13px;overflow:hidden;white-space:nowrap;padding-left:2px;letter-spacing:-0.3px">s/M16/Variants/Rifle_M16a4.et</div>
<div class="a" style="left:114px;top:82px;width:107px;height:14px;background:#1e1e1e;border-radius:2px"></div>
<div class="a" style="left:114px;top:100px;width:107px;height:14px;background:#1e1e1e;border-radius:2px"></div>
<div class="a" style="left:221px;top:82px;width:11px;height:14px;background:#3c3e42;border-radius:1px;color:#ddd;text-align:center;line-height:16px;font-size:8px;letter-spacing:0">..</div>
<div class="a" style="left:221px;top:100px;width:11px;height:14px;background:#3c3e42;border-radius:1px;color:#ddd;text-align:center;line-height:16px;font-size:8px;letter-spacing:0">..</div>
<div class="a" style="left:1px;top:129px;width:222px;height:16px;background:#1f2124"></div>
<div class="a" style="left:1px;top:129px;width:19px;height:16px;background:#393c41;border-top:1px solid #1e88e0"></div>
<div class="t" style="left:5px;top:130px;color:#fff">PC</div>
<div class="t" style="left:25px;top:130px;color:#c0c0c0;font-size:8.300px;letter-spacing:-0.5px">XBOX_ONE</div>
<div class="t" style="left:75.5px;top:130px;color:#c0c0c0;font-size:8.300px;letter-spacing:-0.85px">XBOX_SERIES</div>
<div class="t" style="left:134px;top:130px;color:#c0c0c0;font-size:8.300px;letter-spacing:-0.3px">PS4</div>
<div class="t" style="left:157px;top:130px;color:#c0c0c0;font-size:8.300px;letter-spacing:-0.3px">PS5</div>
<div class="t" style="left:180.5px;top:130px;color:#c0c0c0;font-size:8.300px;letter-spacing:-0.75px">HEADLESS</div>
<div class="a" style="left:2px;top:145px;width:246px;height:209px;background:#2b2b2b;border:1px solid #353535"></div>
<div class="a" style="left:5px;top:150px;width:238px;height:15px;background:#303030;border:1px solid #393939;border-radius:2px;text-align:center;line-height:13px;color:#4c4c4c">Parent: none</div>
<div class="a" style="left:5px;top:169px;width:217px;height:16px;background:#1f1f1f;border-radius:2px"></div>
<svg class="a" style="left:11px;top:172px" width="11" height="11" viewBox="0 0 13 13" fill="none" stroke="#e0e0e0" stroke-width="1.600"><circle cx="5" cy="5" r="3.700"/><path d="M7.800 7.800l4 4"/></svg>
<div class="t" style="left:29px;top:170px;color:#5e5e5e">Search</div>
<div class="a" style="left:226px;top:169px;width:17px;height:16px;background:#3c3d3f;border-radius:2px"></div>
<svg class="a" style="left:229px;top:171.5px" width="11" height="11" viewBox="0 0 24 24"><path fill="#e8e8e8" d="M19.140 12.940c.04-.3.060-.61.060-.94 0-.32-.02-.64-.07-.94l2.030-1.580a.49.49 0 0 0 .12-.61l-1.920-3.320a.488.488 0 0 0-.59-.22l-2.390.96c-.5-.38-1.030-.7-1.620-.94l-.36-2.540a.484.484 0 0 0-.48-.41h-3.840c-.24 0-.43.170-.47.410l-.36 2.540c-.59.240-1.130.570-1.620.940l-2.390-.96c-.22-.08-.47 0-.59.220L2.740 8.870c-.12.210-.08.470.12.610l2.030 1.580c-.05.300-.09.630-.09.940s.2.640.07.940l-2.030 1.580a.49.49 0 0 0-.12.610l1.920 3.320c.12.220.37.290.59.220l2.390-.96c.5.380 1.030.7 1.620.94l.36 2.540c.5.240.24.410.48.410h3.840c.24 0 .44-.17.470-.41l.36-2.540c.59-.24 1.130-.56 1.620-.94l2.390.96c.22.080.47 0 .59-.22l1.920-3.320c.12-.22.070-.47-.12-.61l-2.010-1.580zM12 15.600c-1.980 0-3.600-1.620-3.600-3.600s1.620-3.600 3.600-3.600 3.600 1.620 3.600 3.600-1.620 3.600-3.600 3.600z"/></svg>
<div class="a" style="left:5px;top:190px;width:238px;height:161px;background:#262626;border:1px solid #303030"></div>
<div class="a" style="left:5px;top:193px;width:237px;height:17px;background:#0b78d0"></div>
<svg class="a" style="left:10px;top:198.5px" width="9" height="6" viewBox="0 0 9 6" fill="none" stroke="#fff" stroke-width="1.600"><path d="M.8 .8l3.700 3.700 3.700-3.700"/></svg>
<div class="t b" style="left:28px;top:194.5px;color:#fff;font-size:10.300px;letter-spacing:-0.45px">General</div>
<div class="t" style="left:18px;top:216px;color:#c4c4c4">Present</div>
<div class="t" style="left:18px;top:234px;color:#c4c4c4">Build Tags</div>
<div class="a" style="left:119px;top:215.5px;width:110px;height:14px;background:linear-gradient(#3b3f45,#303338);border-radius:2px"></div>
<div class="a" style="left:212px;top:215.5px;width:1px;height:14px;background:#2a2a2a"></div>
<div class="t" style="left:122px;top:215px;color:#e0e0e0">Yes</div>
<svg class="a" style="left:217.5px;top:221px" width="6" height="4" viewBox="0 0 6 4"><path d="M0 0h6l-3 3.500z" fill="#b0b0b0"/></svg>
<div class="a" style="left:119px;top:234px;width:83px;height:14px;background:#2b2b2c;border-radius:2px"></div>
<div class="t" style="left:120px;top:233.5px;color:#d0d0d0">(0)</div>
<div class="a" style="left:203px;top:234px;width:11px;height:14px;background:#3a3c40;border-radius:1px;color:#ccc;text-align:center;line-height:13px;letter-spacing:0">+</div>
<div class="a" style="left:217px;top:234px;width:12px;height:14px;background:#2c2c2d;border:1px solid #3a3a3a;border-radius:1px;color:#555;text-align:center;line-height:11px;letter-spacing:0">-</div>
<div class="a" style="left:0px;top:355px;width:248px;height:23px;background:#303030"></div>
<div class="t" style="left:5px;top:357.8px;color:#a0a0a0">Details</div>
<div class="a" style="left:35px;top:357px;width:65px;height:17px;background:#35383c;border-bottom:1px solid #1e88e0"></div>
<div class="t" style="left:39px;top:357.8px;color:#fff">Import Settings</div></div>
<div id="log" class="a"><div class="a" style="left:0px;top:0px;width:904px;height:17px;background:#1f2124"></div>
<div class="t b" style="left:6px;top:2px;color:#fff;letter-spacing:-0.7px">Log Console</div>
<svg class="a" style="left:883px;top:5px" width="20" height="9" viewBox="0 0 20 9" fill="none" stroke="#484b50" stroke-width="1"><rect x=".5" y=".5" width="7" height="7" rx="1"/><path d="M2.500 5.500l3-3M3.500 2.500h2v2"/><rect x="10.500" y=".5" width="7" height="7" rx="1"/><path d="M12.500 2.500l3 3M15.500 2.500l-3 3"/></svg>
<div class="a" style="left:3px;top:22px;width:165px;height:16px;background:#1f1f1f;border-radius:2px"></div>
<svg class="a" style="left:9.5px;top:24.5px" width="11" height="11" viewBox="0 0 13 13" fill="none" stroke="#e0e0e0" stroke-width="1.600"><circle cx="5" cy="5" r="3.700"/><path d="M7.800 7.800l4 4"/></svg>
<div class="t" style="left:27px;top:23px;color:#5e5e5e">Search</div>
<div class="a" style="left:172.5px;top:22px;width:58.5px;height:16px;background:#494b4e;border-radius:3px;color:#dcdcdc;text-align:center;line-height:16px;letter-spacing:-0.5px">Clear Console</div>
<div class="a" style="left:741px;top:21px;width:38px;height:19px;background:#202122;border-radius:2px;border-bottom:1px solid #2a7fc4"></div>
<div class="a" style="left:784px;top:21px;width:33px;height:18px;background:#47494c;border-radius:3px"></div>
<div class="a" style="left:822px;top:21px;width:33px;height:18px;background:#47494c;border-radius:3px"></div>
<div class="a" style="left:860px;top:21px;width:19px;height:18px;background:#47494c;border-radius:2px"></div>
<div class="a" style="left:883px;top:21px;width:17px;height:18px;background:#47494c;border-radius:2px"></div>
<svg class="a" style="left:745px;top:25px" width="10" height="10" viewBox="0 0 10 10"><circle cx="5" cy="5" r="5" fill="#e03440"/><path d="M3 3l4 4M7 3l-4 4" stroke="#fff" stroke-width="1.300"/></svg>
<div class="t" style="left:758.5px;top:23.5px;color:#d8d8d8;font-size:9.500px">137</div>
<svg class="a" style="left:787.5px;top:24.5px" width="11" height="10" viewBox="0 0 11 10"><path d="M5.500 0l5.500 10h-11z" fill="#f2b80c"/><path d="M5.500 3.500v3.200M5.500 7.800v1.200" stroke="#2a2a2a" stroke-width="1.200"/></svg>
<div class="t" style="left:801px;top:23.5px;color:#c0c0c0;font-size:9.500px">29</div>
<svg class="a" style="left:826px;top:25px" width="10" height="10" viewBox="0 0 10 10"><circle cx="5" cy="5" r="5" fill="#4aa6f0"/><path d="M5 4.300v3.700M5 2v1.300" stroke="#fff" stroke-width="1.300"/></svg>
<div class="t" style="left:838.5px;top:23.5px;color:#c0c0c0;font-size:9.500px">60</div>
<svg class="a" style="left:865px;top:25px" width="9" height="10" viewBox="0 0 10 11"><path d="M0 0h10l-4 5v6l-2-1.500v-4.500z" fill="#e8e8e8"/></svg>
<svg class="a" style="left:886px;top:24.5px" width="11" height="11" viewBox="0 0 24 24"><path fill="#e8e8e8" d="M19.140 12.940c.04-.3.060-.61.060-.94 0-.32-.02-.64-.07-.94l2.030-1.580a.49.49 0 0 0 .12-.61l-1.920-3.320a.488.488 0 0 0-.59-.22l-2.390.96c-.5-.38-1.030-.7-1.620-.94l-.36-2.540a.484.484 0 0 0-.48-.41h-3.840c-.24 0-.43.170-.47.410l-.36 2.540c-.59.240-1.130.570-1.620.940l-2.390-.96c-.22-.08-.47 0-.59.220L2.740 8.870c-.12.210-.08.470.12.610l2.030 1.580c-.05.300-.09.630-.09.940s.2.640.07.940l-2.030 1.580a.49.49 0 0 0-.12.610l1.920 3.320c.12.220.37.290.59.220l2.390-.96c.5.380 1.030.7 1.620.94l.36 2.540c.5.240.24.410.48.410h3.840c.24 0 .44-.17.470-.41l.36-2.540c.59-.24 1.130-.56 1.620-.94l2.390.96c.22.080.47 0 .59-.22l1.920-3.320c.12-.22.070-.47-.12-.61l-2.010-1.580zM12 15.600c-1.980 0-3.600-1.620-3.600-3.600s1.620-3.600 3.600-3.600 3.600 1.620 3.600 3.600-1.620 3.600-3.600 3.600z"/></svg>
<div class="a" style="left:2px;top:43px;width:898px;height:77px;background:#262626;overflow:hidden"><div class="ln" style="top:-7px;left:5.0px"><span style="opacity:.6">RESOURCES (E): Wrong GUID/name for resource <span class="lk">@"{EE40C8953EF17597}Data/defaultgeneratedmaterial.001</span></span></div>
<div class="ln" style="top:3.5px;left:5.0px">RESOURCES (E): Failed to load 'm16a4/wide reciver .001_BCR.edds'</div>
<div class="ln" style="top:13px;left:5.0px">RESOURCES (E): Failed to load 'm16a4/wide reciver .001_NMO.edds'</div>
<div class="ln" style="top:22.600000000000023px;left:5.0px">MATERIAL     : Material load <span class="lk">@"{F7A0F00ADB3C6FAE}Data/Acog.emat"</span></div>
<div class="ln" style="top:32.299999999999955px;left:9.5px">RESOURCES (E): Wrong GUID/name for resource <span class="lk">@"{BE6A0736B64C4374}Data/low2.008_BCR.1001.edds"</span> in property "BCRMap"</div>
<div class="ln" style="top:42px;left:9.5px">RESOURCES (E): Wrong GUID/name for resource <span class="lk">@"{EE40C8953EF17597}Data/defaultgeneratedmaterial.001_BCR.1001.edds"</span> in property "NMOMap"</div>
<div class="ln" style="top:51.60000000000002px;left:5.0px">RESOURCES (E): Failed to load 'Data/low2.008_BCR.1001.edds'</div>
<div class="ln" style="top:61.299999999999955px;left:5.0px">RESOURCES (E): Failed to load 'Data/defaultgeneratedmaterial.001_BCR.1001.edds'</div></div>
<div class="a" style="left:889px;top:43px;width:11px;height:77px;background:#2c2c2c"></div>
<div class="a" style="left:891.5px;top:104px;width:5px;height:14px;background:#9a9a9a;border-radius:3px"></div>
<div class="a" style="left:2px;top:120px;width:887px;height:10.5px;background:#313233"></div>
<div class="a" style="left:889px;top:120px;width:11px;height:10.5px;background:#2c2c2c"></div>
<div class="a" style="left:7px;top:122px;width:275px;height:6px;background:#8e8e8e;border-radius:3px"></div>
<div class="a" style="left:2.5px;top:134px;width:887px;height:12px;background:#373b41;border:1px solid #242527"></div>
<div class="a" style="left:3.5px;top:135px;width:40px;height:10px;background:#24272b"></div>
<div class="t" style="left:27px;top:133.5px;color:#4a4d52;font-size:8px">1</div>
<svg class="a" style="left:889px;top:134px" width="10" height="10" viewBox="0 0 10 10"><path d="M0 1h10" stroke="#e8e8e8" stroke-width="1.500"/><circle cx="5" cy="6" r="2.500" fill="#777"/></svg></div>
<div id="status" class="a"><div class="t" style="left:2px;letter-spacing:-0.395px">C:/Users/hpeop/OneDrive/Documents/My Games/ArmaReforgerWorkbench/addor</div>
<div class="t" style="left:307px;letter-spacing:-0.52px">M: 30/07/2024 06:30:49</div>
<div class="t" style="left:423px;letter-spacing:-0.5px">C: 30/11/2024 15:13:13</div>
<div class="t" style="left:540px;letter-spacing:-0.62px">2695 B (~2.63 KB)</div>
<div class="t" style="left:657px;letter-spacing:-0.25px">Entity prefab file</div>
<div class="t" style="right:2px;letter-spacing:-0.46px">Version 1.2.0.124 (production)</div></div>
<div id="task" class="a"><svg class="a" style="left:16.5px;top:10.0px" width="15" height="15" viewBox="0 0 15 15"><defs><radialGradient id="sun" cx=".4" cy=".35" r=".7"><stop offset="0" stop-color="#ffc21a"/><stop offset="1" stop-color="#f07a08"/></radialGradient></defs><circle cx="7.500" cy="7.500" r="7.200" fill="url(#sun)"/></svg>
<div class="t" style="left:39px;top:5px;color:#222;font-size:9.500px;letter-spacing:0">23°F</div>
<div class="t" style="left:39px;top:16px;color:#666;font-size:9.500px;letter-spacing:-0.1px">Sunny</div>
<svg class="a" style="left:235.5px;top:10.0px" width="17" height="17" viewBox="0 0 17 17"><defs><linearGradient id="wl" x1="0" y1="0" x2="1" y2="1"><stop offset="0" stop-color="#4cc2ff"/><stop offset="1" stop-color="#0a6fd0"/></linearGradient></defs><path d="M0 0h8v8h-8zM9 0h8v8h-8zM0 9h8v8h-8zM9 9h8v8h-8z" fill="url(#wl)"/></svg>
<div class="a" style="left:265px;top:8px;width:162.500px;height:22px;background:#faf9f6;border-radius:11px;border:1px solid #e4e2dc"></div>
<svg class="a" style="left:272.0px;top:13.0px" width="11" height="11" viewBox="0 0 11 11"><circle cx="4.500" cy="4.500" r="3.600" fill="none" stroke="#333" stroke-width="1.200"/><path d="M7.200 7.200l3.300 3.300" stroke="#333" stroke-width="1.300"/></svg>
<div class="t" style="left:291px;top:11px;color:#4a4a4a;font-size:10.500px;letter-spacing:0">Search</div>
<svg class="a" style="left:391.0px;top:8.0px" width="34" height="20" viewBox="0 0 34 20"><ellipse cx="8" cy="7" rx="5" ry="5" fill="#c8c4bc"/><path d="M3 18q1-8 6-8t6 8z" fill="#9a948a"/><circle cx="8.500" cy="8" r="3" fill="#e0b8a0"/><path d="M2 19h30v1h-30z" fill="#7a9a50"/><path d="M14 19q6-6 12-2l4 2z" fill="#6a9a48"/><path d="M28 3l-4 14M24 6l8 6M22 12l10-4" stroke="#4a4038" stroke-width="1"/><path d="M18 17l3-5 2 5z" fill="#5a4a3a"/></svg>
<svg class="a" style="left:437.0px;top:11.0px" width="18" height="15" viewBox="0 0 18 15"><rect x="6" y="0" width="12" height="10" rx="1" fill="#f4f4f4"/><rect x="0" y="3" width="13" height="12" rx="1" fill="#2a2a2a"/><rect x="5" y="3" width="8" height="7" fill="#555"/></svg>
<svg class="a" style="left:470.5px;top:9.5px" width="18" height="17" viewBox="0 0 18 17"><defs><linearGradient id="cp" x1="0" y1="0" x2="1" y2="1"><stop offset="0" stop-color="#2a8cf0"/><stop offset=".35" stop-color="#8a5cf0"/><stop offset=".65" stop-color="#f0508a"/><stop offset="1" stop-color="#f8b030"/></linearGradient></defs><path d="M5 1h8q3 0 4 3l1 4q0 3-3 3l-1 3q-1 3-4 3h-6q-3 0-3.500-3l-.5-4q0-3 3-3l1-3q1-3 2-3z" fill="url(#cp)"/><path d="M7 6h5l-1 5h-5z" fill="#f4efe8"/></svg>
<svg class="a" style="left:503.0px;top:10.5px" width="19" height="16" viewBox="0 0 19 16"><path d="M0 2q0-1.500 1.500-1.500h5l2 2h9q1.500 0 1.500 1.500v10.500q0 1.500-1.500 1.500h-16q-1.500 0-1.500-1.500z" fill="#f2b926"/><path d="M0 5.500h19v9q0 1.500-1.500 1.500h-16q-1.500 0-1.500-1.500z" fill="#fbd758"/><rect x="3" y="11" width="13" height="4" rx=".8" fill="#1c7cd6"/></svg>
<svg class="a" style="left:537.0px;top:9.5px" width="18" height="18" viewBox="0 0 18 18"><defs><linearGradient id="eg" x1="0" y1="0" x2="1" y2="1"><stop offset="0" stop-color="#38c6a0"/><stop offset=".5" stop-color="#1c8fd8"/><stop offset="1" stop-color="#0c56a8"/></linearGradient></defs><circle cx="9" cy="9" r="9" fill="url(#eg)"/><path d="M6 11q0-4 4.500-4t5 3q0 2-3 2h-3q0 3 4 3-5 2-7.500-4z" fill="#f0f8ff"/></svg>
<svg class="a" style="left:569.5px;top:10.5px" width="18" height="17" viewBox="0 0 18 17"><path d="M5 4v-2q0-2 2-2h4q2 0 2 2v2" fill="none" stroke="#1c5ea8" stroke-width="1.500"/><rect x="0" y="3.500" width="18" height="13.500" rx="2.500" fill="#1a66b8"/><rect x="5" y="6.500" width="3.500" height="3.500" fill="#f25022"/><rect x="9.500" y="6.500" width="3.500" height="3.500" fill="#7fba00"/><rect x="5" y="11" width="3.500" height="3.500" fill="#00a4ef"/><rect x="9.500" y="11" width="3.500" height="3.500" fill="#ffb900"/></svg>
<svg class="a" style="left:602.0px;top:9.5px" width="18" height="18" viewBox="0 0 18 18"><defs><radialGradient id="ff" cx=".6" cy=".25" r=".9"><stop offset="0" stop-color="#ffd83a"/><stop offset=".45" stop-color="#ff7a18"/><stop offset="1" stop-color="#e8265a"/></radialGradient></defs><circle cx="9" cy="9" r="9" fill="url(#ff)"/><circle cx="9.500" cy="9.500" r="4.500" fill="#7a3ad8"/><path d="M5 8q3-3 7-1-3 0-4 3z" fill="#ffb030"/></svg>
<svg class="a" style="left:635.0px;top:9.5px" width="18" height="18" viewBox="0 0 18 18"><rect width="18" height="18" fill="#0b2748"/><path d="M5 4h8v6q0 4-4 4t-4-4zM9 4v5M5 9h8" fill="none" stroke="#39b8e8" stroke-width="1.300"/></svg>
<svg class="a" style="left:667.5px;top:10.5px" width="19" height="16" viewBox="0 0 19 16"><path d="M1 9l9-7.500 1.500 1.500-3 2.500h6q4.500 1.500 4.500 5t-5 4.500-6-2.500l-1-2-4.500 0z" fill="#ea7600"/><circle cx="12.500" cy="10" r="3.800" fill="#fff"/><circle cx="12.500" cy="10" r="2.200" fill="#265787"/></svg>
<svg class="a" style="left:701.0px;top:9.5px" width="18" height="18" viewBox="0 0 18 18"><circle cx="9" cy="9" r="9" fill="#1ed760"/><path d="M4 6.500q5.500-1.500 10.500 1M4.500 9.500q4.500-1.200 9 .8M5 12.200q4-1 7.500 .6" stroke="#111" stroke-width="1.500" fill="none" stroke-linecap="round"/></svg>
<svg class="a" style="left:734.5px;top:9.5px" width="18" height="18" viewBox="0 0 18 18"><circle cx="9" cy="9" r="9" fill="#13294e"/><circle cx="11.800" cy="6.800" r="3" fill="none" stroke="#fff" stroke-width="1.300"/><path d="M0 9.500l6 2.500 3.500-3" stroke="#fff" stroke-width="2.200" fill="none"/><circle cx="6" cy="12.500" r="2" fill="#fff"/></svg>
<svg class="a" style="left:767.0px;top:9.5px" width="18" height="18" viewBox="0 0 18 18"><rect width="18" height="18" rx="3.500" fill="#16161c"/><path d="M3 6l3 3-3 3 6-2.500 6 2.500-3-3 3-3-6 2.500z" fill="#f2a32a"/></svg>
<svg class="a" style="left:800.5px;top:9.5px" width="18" height="18" viewBox="0 0 18 18"><rect x="4" y="0" width="13" height="13" rx="1.500" fill="#5a7cc0"/><rect x="6" y="2" width="9" height="9" fill="#9ab8e8"/><rect x="1" y="6" width="11" height="12" rx="1.500" fill="#f4f4f4"/><rect x="3" y="8.500" width="3.200" height="3.200" fill="#e8a020"/><rect x="6.800" y="8.500" width="3.200" height="3.200" fill="#48b848"/><rect x="3" y="12.300" width="3.200" height="3.200" fill="#3a90e0"/><rect x="6.800" y="12.300" width="3.200" height="3.200" fill="#e85050"/></svg>
<div class="a" style="left:828px;top:3.500px;width:28px;height:28.500px;background:#fbf3ea;border-radius:3px;border:1px solid #efe4d8"></div>
<svg class="a" style="left:833.2px;top:13.899999999999977px" width="18" height="9" viewBox="0 0 18 9"><path d="M.3 .3l5.200 .4v4.800z M6.600 .3h3.100l4.200 5.600h-6.300z M10.800 .3h6.900v8.400z" fill="#146ea6"/></svg>
<svg class="a" style="left:865.8px;top:9.0px" width="18" height="18" viewBox="0 0 18 18"><circle cx="9" cy="9" r="9" fill="#5662f0"/><path d="M4.500 6q4.500-2 9 0 1.500 3 1.200 6.500-1.500 1-3 1.200l-.6-1.200q-2.100.6-4.200 0l-.6 1.200q-1.500-.2-3-1.200-.3-3.500 1.200-6.500z" fill="#fff"/><circle cx="7" cy="9.800" r="1.200" fill="#5662f0"/><circle cx="11" cy="9.800" r="1.200" fill="#5662f0"/></svg>
<svg class="a" style="left:877.25px;top:6.25px" width="9.5" height="9.5" viewBox="0 0 9.5 9.5"><circle cx="4.500" cy="4.500" r="4.500" fill="#e8484c"/><circle cx="4.500" cy="4.500" r="1.800" fill="#fff"/></svg>
<div class="a" style="left:510.5px;top:30.5px;width:4px;height:1.500px;background:#8a8a88;border-radius:1px"></div>
<div class="a" style="left:544px;top:30.5px;width:4px;height:1.500px;background:#8a8a88;border-radius:1px"></div>
<div class="a" style="left:675px;top:30.5px;width:4px;height:1.500px;background:#8a8a88;border-radius:1px"></div>
<div class="a" style="left:708px;top:30.5px;width:4px;height:1.500px;background:#8a8a88;border-radius:1px"></div>
<div class="a" style="left:741.5px;top:30.5px;width:4px;height:1.500px;background:#8a8a88;border-radius:1px"></div>
<div class="a" style="left:774px;top:30.5px;width:4px;height:1.500px;background:#8a8a88;border-radius:1px"></div>
<div class="a" style="left:807.5px;top:30.5px;width:4px;height:1.500px;background:#8a8a88;border-radius:1px"></div>
<div class="a" style="left:872.5px;top:30.5px;width:4px;height:1.500px;background:#8a8a88;border-radius:1px"></div>
<div class="a" style="left:836.500px;top:30px;width:11px;height:2px;background:#1c74d0;border-radius:1px"></div>
<svg class="a" style="left:942.5px;top:15.5px" width="9" height="5" viewBox="0 0 9 5"><path d="M.7 4.300l3.800-3.600 3.800 3.600" fill="none" stroke="#222" stroke-width="1.200"/></svg>
<svg class="a" style="left:964.0px;top:13.0px" width="13" height="11" viewBox="0 0 13 11"><path d="M3 8.500q-2.500 0-2.500-2.300t2.500-2.300q.5-3 3.500-3t3.500 3q2 0 2 2" fill="none" stroke="#333" stroke-width="1.100"/><circle cx="9.500" cy="8" r="3" fill="#e03a3a"/><path d="M8.300 6.800l2.400 2.400M10.700 6.800l-2.400 2.400" stroke="#fff" stroke-width=".8"/></svg>
<svg class="a" style="left:990.7px;top:11.5px" width="8" height="13" viewBox="0 0 8 13"><rect x="2" y="0" width="4" height="8" rx="2" fill="#3a78c8"/><path d="M.5 5.500q0 4 3.500 4t3.500-4M4 9.500v3" fill="none" stroke="#3a78c8" stroke-width="1"/></svg>
<svg class="a" style="left:1012.3px;top:12.5px" width="13" height="10" viewBox="0 0 13 10"><path d="M.8 3.500q5.700-5 11.400 0M2.800 5.800q3.700-3.300 7.400 0M4.800 8q1.700-1.600 3.400 0" fill="none" stroke="#222" stroke-width="1.100"/><circle cx="6.500" cy="9.200" r=".8" fill="#222"/></svg>
<svg class="a" style="left:1029.7px;top:13.0px" width="14" height="10" viewBox="0 0 14 10"><path d="M.5 3.500h2.500l3-2.800v8.600l-3-2.800h-2.500z" fill="none" stroke="#222" stroke-width="1"/><path d="M8 3q1.500 2 0 4M10 1.800q2.500 3.200 0 6.400M12 .6q3.500 4.400 0 8.800" fill="none" stroke="#222" stroke-width="1"/></svg>
<svg class="a" style="left:1047.7px;top:13.5px" width="14" height="9" viewBox="0 0 14 9"><rect x="1" y="1.500" width="11" height="6.500" rx="1.500" fill="#222"/><rect x="12.300" y="3.500" width="1.500" height="2.500" fill="#222"/><path d="M2.500 0l1.500 2h-3z" fill="#222"/></svg>
<div class="t" style="right:33px;top:5px;color:#222;font-size:9.500px;letter-spacing:-0.5px">3:18 PM</div>
<div class="t" style="right:33px;top:17px;color:#222;font-size:9.500px;letter-spacing:0">11/30/2024</div>
<svg class="a" style="left:1125.5px;top:12.5px" width="11" height="12" viewBox="0 0 11 12"><path d="M1.500 9v-1q1-1 1-4t3-3.500 3 3.500 1 4v1z" fill="none" stroke="#222" stroke-width="1.100"/><path d="M4.300 10.500q1.200 1.500 2.400 0" fill="none" stroke="#222" stroke-width="1"/></svg></div>

</body></html>
